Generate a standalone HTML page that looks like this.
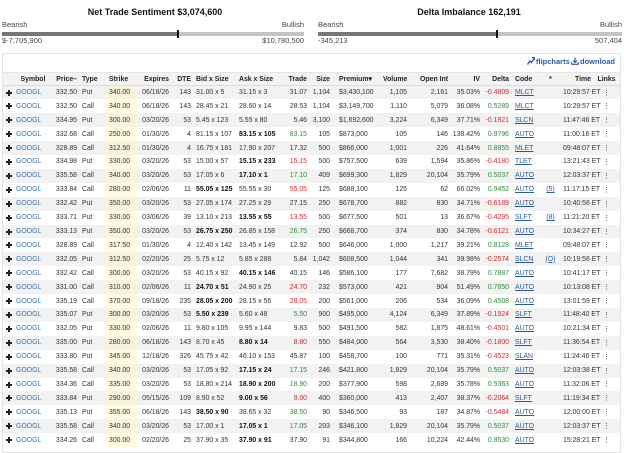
<!DOCTYPE html>
<html><head><meta charset="utf-8"><style>
*{margin:0;padding:0;box-sizing:border-box}
body{width:624px;height:445px;overflow:hidden;background:#fff;font-family:"Liberation Sans",sans-serif;color:#333;position:relative}
.t{position:absolute;font-weight:bold;font-size:9px;color:#111;text-align:center}
.l{position:absolute;font-size:7.5px;color:#444}
.bar{position:absolute;height:4px;top:32px}
.mk{position:absolute;top:30px;width:2px;height:8px;background:#111}
.box{position:absolute;left:2px;top:53px;width:619px;height:400px;border:1px solid #e4e4e4}
.tb{position:absolute;top:57px;font-size:7.5px;font-weight:bold;color:#2a5f9e}
.tb svg{vertical-align:-1px;margin-right:1px}
table{position:absolute;left:3px;top:72px;border-collapse:collapse;table-layout:fixed;width:617px;font-size:6.9px}
td,th{padding:0;white-space:nowrap;overflow:visible;height:13.92px}
th{height:13px;font-weight:bold;color:#222;background:#f3f3f3;border-bottom:1px solid #ddd;border-top:1px solid #e6e6e6}
tr:nth-child(even) td{background:#f2f2f2}
td.s{background:#fffbe3 !important;padding-left:4px}
tr:nth-child(even) td.s{background:#f7f3dc !important}
.r{text-align:right;padding-right:2px}
.lf{text-align:left;padding-left:3px}
.c{text-align:center}
.g{color:#2e8b3e}.rd{color:#d0282c}
.sy{color:#3d74ad}
.cd{color:#2a5a9e;text-decoration:underline}
b{font-weight:bold;color:#111}
.p{position:relative}
.p::before{content:"";position:absolute;left:3px;top:6px;width:6px;height:2px;background:#222}
.p::after{content:"";position:absolute;left:5px;top:4px;width:2px;height:6px;background:#222}
</style></head><body>
<div class="t" style="left:0;width:310px;top:7px">Net Trade Sentiment $3,074,600</div>
<div class="l" style="left:2px;top:20px">Bearish</div>
<div class="l" style="left:270px;top:20px;width:34px;text-align:right">Bullish</div>
<div class="bar" style="left:2px;width:176px;background:#777"></div>
<div class="bar" style="left:178px;width:126px;background:#c4c4c4"></div>
<div class="mk" style="left:177px"></div>
<div class="l" style="left:2px;top:36px">$-7,705,900</div>
<div class="l" style="left:240px;top:36px;width:64px;text-align:right">$10,780,500</div>

<div class="t" style="left:316px;width:306px;top:7px">Delta Imbalance 162,191</div>
<div class="l" style="left:318px;top:20px">Bearish</div>
<div class="l" style="left:580px;top:20px;width:42px;text-align:right">Bullish</div>
<div class="bar" style="left:318px;width:179px;background:#777"></div>
<div class="bar" style="left:497px;width:125px;background:#c4c4c4"></div>
<div class="mk" style="left:496px"></div>
<div class="l" style="left:318px;top:36px">-345,213</div>
<div class="l" style="left:570px;top:36px;width:52px;text-align:right">507,404</div>

<div class="box"></div>
<div class="tb" style="left:527px"><svg width="8" height="8" viewBox="0 0 8 8"><path d="M0.5 7.5 L3 4 L4.5 5.5 L7.5 1" stroke="#2a5f9e" stroke-width="1.4" fill="none"/><path d="M5 0.5 H7.5 V3" stroke="#2a5f9e" stroke-width="1.2" fill="none"/></svg>flipcharts</div>
<div class="tb" style="left:571px"><svg width="8" height="8" viewBox="0 0 8 8"><path d="M4 0.5 V5.5 M2 3.5 L4 5.5 L6 3.5 M0.8 5 V7.3 H7.2 V5" stroke="#2a5f9e" stroke-width="1.2" fill="none"/></svg>download</div>

<table>
<colgroup><col style="width:10px"><col style="width:40px"><col style="width:26px"><col style="width:26px"><col style="width:32px"><col style="width:34px"><col style="width:22px"><col style="width:43px"><col style="width:47px"><col style="width:26px"><col style="width:23px"><col style="width:51px"><col style="width:26px"><col style="width:41px"><col style="width:32px"><col style="width:29px"><col style="width:27px"><col style="width:25px"><col style="width:30px"><col style="width:27px"></colgroup>
<tr><th></th><th class="c">Symbol</th><th class="r">Price&#x2013;</th><th class="lf">Type</th><th class="lf" style="padding-left:4px">Strike</th><th class="r">Expires</th><th class="r">DTE</th><th class="lf">Bid x Size</th><th class="lf">Ask x Size</th><th class="r">Trade</th><th class="r">Size</th><th class="lf" style="padding-left:7px">Premium&#x25BE;</th><th class="r">Volume</th><th class="r">Open Int</th><th class="r">IV</th><th class="r">Delta</th><th class="lf" style="padding-left:4px">Code</th><th class="c">*</th><th class="r">Time</th><th class="c">Links</th></tr>
<tr><td class="p"></td><td class="sy lf">GOOGL</td><td class="r">332.50</td><td class="lf">Put</td><td class="s">340.00</td><td class="r">06/18/26</td><td class="r">143</td><td class="lf">31.00 x 5</td><td class="lf">31.15 x 3</td><td class="r">31.07</td><td class="r">1,104</td><td class="lf" style="padding-left:7px">$3,430,100</td><td class="r">1,105</td><td class="r">2,161</td><td class="r">35.03%</td><td class="r rd">-0.4809</td><td class="lf cd" style="padding-left:4px">MLCT</td><td></td><td class="r">10:29:57 ET</td><td class="c">&#8942;</td></tr>
<tr><td class="p"></td><td class="sy lf">GOOGL</td><td class="r">332.50</td><td class="lf">Call</td><td class="s">340.00</td><td class="r">06/18/26</td><td class="r">143</td><td class="lf">28.45 x 21</td><td class="lf">28.60 x 14</td><td class="r">28.53</td><td class="r">1,104</td><td class="lf" style="padding-left:7px">$3,149,700</td><td class="r">1,110</td><td class="r">5,079</td><td class="r">36.08%</td><td class="r g">0.5289</td><td class="lf cd" style="padding-left:4px">MLCT</td><td></td><td class="r">10:29:57 ET</td><td class="c">&#8942;</td></tr>
<tr><td class="p"></td><td class="sy lf">GOOGL</td><td class="r">334.95</td><td class="lf">Put</td><td class="s">300.00</td><td class="r">03/20/26</td><td class="r">53</td><td class="lf">5.45 x 123</td><td class="lf">5.55 x 80</td><td class="r">5.46</td><td class="r">3,100</td><td class="lf" style="padding-left:7px">$1,692,600</td><td class="r">3,224</td><td class="r">6,349</td><td class="r">37.71%</td><td class="r rd">-0.1921</td><td class="lf cd" style="padding-left:4px">SLCN</td><td></td><td class="r">11:47:46 ET</td><td class="c">&#8942;</td></tr>
<tr><td class="p"></td><td class="sy lf">GOOGL</td><td class="r">332.68</td><td class="lf">Call</td><td class="s">250.00</td><td class="r">01/30/26</td><td class="r">4</td><td class="lf">81.15 x 107</td><td class="lf"><b>83.15 x 105</b></td><td class="r g">83.15</td><td class="r">105</td><td class="lf" style="padding-left:7px">$873,000</td><td class="r">105</td><td class="r">146</td><td class="r">138.42%</td><td class="r g">0.9796</td><td class="lf cd" style="padding-left:4px">AUTO</td><td></td><td class="r">11:00:16 ET</td><td class="c">&#8942;</td></tr>
<tr><td class="p"></td><td class="sy lf">GOOGL</td><td class="r">328.89</td><td class="lf">Call</td><td class="s">312.50</td><td class="r">01/30/26</td><td class="r">4</td><td class="lf">16.75 x 181</td><td class="lf">17.90 x 207</td><td class="r">17.32</td><td class="r">500</td><td class="lf" style="padding-left:7px">$866,000</td><td class="r">1,001</td><td class="r">226</td><td class="r">41.64%</td><td class="r g">0.8855</td><td class="lf cd" style="padding-left:4px">MLET</td><td></td><td class="r">09:48:07 ET</td><td class="c">&#8942;</td></tr>
<tr><td class="p"></td><td class="sy lf">GOOGL</td><td class="r">334.98</td><td class="lf">Put</td><td class="s">330.00</td><td class="r">03/20/26</td><td class="r">53</td><td class="lf">15.00 x 57</td><td class="lf"><b>15.15 x 233</b></td><td class="r rd">15.15</td><td class="r">500</td><td class="lf" style="padding-left:7px">$757,500</td><td class="r">639</td><td class="r">1,594</td><td class="r">35.86%</td><td class="r rd">-0.4180</td><td class="lf cd" style="padding-left:4px">TLET</td><td></td><td class="r">13:21:43 ET</td><td class="c">&#8942;</td></tr>
<tr><td class="p"></td><td class="sy lf">GOOGL</td><td class="r">335.58</td><td class="lf">Call</td><td class="s">340.00</td><td class="r">03/20/26</td><td class="r">53</td><td class="lf">17.05 x 6</td><td class="lf"><b>17.10 x 1</b></td><td class="r g">17.10</td><td class="r">409</td><td class="lf" style="padding-left:7px">$699,300</td><td class="r">1,829</td><td class="r">20,104</td><td class="r">35.79%</td><td class="r g">0.5037</td><td class="lf cd" style="padding-left:4px">AUTO</td><td></td><td class="r">12:03:37 ET</td><td class="c">&#8942;</td></tr>
<tr><td class="p"></td><td class="sy lf">GOOGL</td><td class="r">333.84</td><td class="lf">Call</td><td class="s">280.00</td><td class="r">02/06/26</td><td class="r">11</td><td class="lf"><b>55.05 x 125</b></td><td class="lf">55.55 x 30</td><td class="r rd">55.05</td><td class="r">125</td><td class="lf" style="padding-left:7px">$688,100</td><td class="r">125</td><td class="r">62</td><td class="r">66.02%</td><td class="r g">0.9452</td><td class="lf cd" style="padding-left:4px">AUTO</td><td class="cd c">(5)</td><td class="r">11:17:15 ET</td><td class="c">&#8942;</td></tr>
<tr><td class="p"></td><td class="sy lf">GOOGL</td><td class="r">332.42</td><td class="lf">Put</td><td class="s">350.00</td><td class="r">03/20/26</td><td class="r">53</td><td class="lf">27.05 x 174</td><td class="lf">27.25 x 29</td><td class="r">27.15</td><td class="r">250</td><td class="lf" style="padding-left:7px">$678,700</td><td class="r">882</td><td class="r">830</td><td class="r">34.71%</td><td class="r rd">-0.6189</td><td class="lf cd" style="padding-left:4px">AUTO</td><td></td><td class="r">10:40:58 ET</td><td class="c">&#8942;</td></tr>
<tr><td class="p"></td><td class="sy lf">GOOGL</td><td class="r">333.71</td><td class="lf">Put</td><td class="s">330.00</td><td class="r">03/06/26</td><td class="r">39</td><td class="lf">13.10 x 213</td><td class="lf"><b>13.55 x 55</b></td><td class="r rd">13.55</td><td class="r">500</td><td class="lf" style="padding-left:7px">$677,500</td><td class="r">501</td><td class="r">13</td><td class="r">36.67%</td><td class="r rd">-0.4295</td><td class="lf cd" style="padding-left:4px">SLFT</td><td class="cd c">(8)</td><td class="r">11:21:20 ET</td><td class="c">&#8942;</td></tr>
<tr><td class="p"></td><td class="sy lf">GOOGL</td><td class="r">333.13</td><td class="lf">Put</td><td class="s">350.00</td><td class="r">03/20/26</td><td class="r">53</td><td class="lf"><b>26.75 x 250</b></td><td class="lf">26.85 x 158</td><td class="r g">26.75</td><td class="r">250</td><td class="lf" style="padding-left:7px">$668,700</td><td class="r">374</td><td class="r">830</td><td class="r">34.78%</td><td class="r rd">-0.6121</td><td class="lf cd" style="padding-left:4px">AUTO</td><td></td><td class="r">10:34:27 ET</td><td class="c">&#8942;</td></tr>
<tr><td class="p"></td><td class="sy lf">GOOGL</td><td class="r">328.89</td><td class="lf">Call</td><td class="s">317.50</td><td class="r">01/30/26</td><td class="r">4</td><td class="lf">12.40 x 142</td><td class="lf">13.45 x 149</td><td class="r">12.92</td><td class="r">500</td><td class="lf" style="padding-left:7px">$646,000</td><td class="r">1,000</td><td class="r">1,217</td><td class="r">39.21%</td><td class="r g">0.8128</td><td class="lf cd" style="padding-left:4px">MLET</td><td></td><td class="r">09:48:07 ET</td><td class="c">&#8942;</td></tr>
<tr><td class="p"></td><td class="sy lf">GOOGL</td><td class="r">332.05</td><td class="lf">Put</td><td class="s">312.50</td><td class="r">02/20/26</td><td class="r">25</td><td class="lf">5.75 x 12</td><td class="lf">5.85 x 288</td><td class="r">5.84</td><td class="r">1,042</td><td class="lf" style="padding-left:7px">$608,500</td><td class="r">1,044</td><td class="r">341</td><td class="r">39.98%</td><td class="r rd">-0.2574</td><td class="lf cd" style="padding-left:4px">SLCN</td><td class="cd c">(O)</td><td class="r">10:19:58 ET</td><td class="c">&#8942;</td></tr>
<tr><td class="p"></td><td class="sy lf">GOOGL</td><td class="r">332.42</td><td class="lf">Call</td><td class="s">300.00</td><td class="r">03/20/26</td><td class="r">53</td><td class="lf">40.15 x 92</td><td class="lf"><b>40.15 x 146</b></td><td class="r">40.15</td><td class="r">146</td><td class="lf" style="padding-left:7px">$586,100</td><td class="r">177</td><td class="r">7,682</td><td class="r">38.79%</td><td class="r g">0.7887</td><td class="lf cd" style="padding-left:4px">AUTO</td><td></td><td class="r">10:41:17 ET</td><td class="c">&#8942;</td></tr>
<tr><td class="p"></td><td class="sy lf">GOOGL</td><td class="r">331.00</td><td class="lf">Call</td><td class="s">310.00</td><td class="r">02/06/26</td><td class="r">11</td><td class="lf"><b>24.70 x 51</b></td><td class="lf">24.90 x 25</td><td class="r rd">24.70</td><td class="r">232</td><td class="lf" style="padding-left:7px">$573,000</td><td class="r">421</td><td class="r">904</td><td class="r">51.49%</td><td class="r g">0.7850</td><td class="lf cd" style="padding-left:4px">AUTO</td><td></td><td class="r">10:13:08 ET</td><td class="c">&#8942;</td></tr>
<tr><td class="p"></td><td class="sy lf">GOOGL</td><td class="r">335.19</td><td class="lf">Call</td><td class="s">370.00</td><td class="r">09/18/26</td><td class="r">235</td><td class="lf"><b>28.05 x 200</b></td><td class="lf">28.15 x 56</td><td class="r rd">28.05</td><td class="r">200</td><td class="lf" style="padding-left:7px">$561,000</td><td class="r">206</td><td class="r">534</td><td class="r">36.09%</td><td class="r g">0.4508</td><td class="lf cd" style="padding-left:4px">AUTO</td><td></td><td class="r">13:01:59 ET</td><td class="c">&#8942;</td></tr>
<tr><td class="p"></td><td class="sy lf">GOOGL</td><td class="r">335.07</td><td class="lf">Put</td><td class="s">300.00</td><td class="r">03/20/26</td><td class="r">53</td><td class="lf"><b>5.50 x 239</b></td><td class="lf">5.60 x 48</td><td class="r g">5.50</td><td class="r">900</td><td class="lf" style="padding-left:7px">$495,000</td><td class="r">4,124</td><td class="r">6,349</td><td class="r">37.89%</td><td class="r rd">-0.1924</td><td class="lf cd" style="padding-left:4px">SLFT</td><td></td><td class="r">11:48:40 ET</td><td class="c">&#8942;</td></tr>
<tr><td class="p"></td><td class="sy lf">GOOGL</td><td class="r">332.05</td><td class="lf">Put</td><td class="s">330.00</td><td class="r">02/06/26</td><td class="r">11</td><td class="lf">9.80 x 105</td><td class="lf">9.95 x 144</td><td class="r">9.83</td><td class="r">500</td><td class="lf" style="padding-left:7px">$491,500</td><td class="r">582</td><td class="r">1,875</td><td class="r">48.61%</td><td class="r rd">-0.4501</td><td class="lf cd" style="padding-left:4px">AUTO</td><td></td><td class="r">10:21:34 ET</td><td class="c">&#8942;</td></tr>
<tr><td class="p"></td><td class="sy lf">GOOGL</td><td class="r">335.00</td><td class="lf">Put</td><td class="s">280.00</td><td class="r">06/18/26</td><td class="r">143</td><td class="lf">8.70 x 45</td><td class="lf"><b>8.80 x 14</b></td><td class="r rd">8.80</td><td class="r">550</td><td class="lf" style="padding-left:7px">$484,000</td><td class="r">564</td><td class="r">3,530</td><td class="r">38.40%</td><td class="r rd">-0.1800</td><td class="lf cd" style="padding-left:4px">SLFT</td><td></td><td class="r">11:36:54 ET</td><td class="c">&#8942;</td></tr>
<tr><td class="p"></td><td class="sy lf">GOOGL</td><td class="r">333.80</td><td class="lf">Put</td><td class="s">345.00</td><td class="r">12/18/26</td><td class="r">326</td><td class="lf">45.75 x 42</td><td class="lf">46.10 x 153</td><td class="r">45.87</td><td class="r">100</td><td class="lf" style="padding-left:7px">$458,700</td><td class="r">100</td><td class="r">771</td><td class="r">35.31%</td><td class="r rd">-0.4523</td><td class="lf cd" style="padding-left:4px">SLAN</td><td></td><td class="r">11:24:46 ET</td><td class="c">&#8942;</td></tr>
<tr><td class="p"></td><td class="sy lf">GOOGL</td><td class="r">335.58</td><td class="lf">Call</td><td class="s">340.00</td><td class="r">03/20/26</td><td class="r">53</td><td class="lf">17.05 x 92</td><td class="lf"><b>17.15 x 24</b></td><td class="r g">17.15</td><td class="r">246</td><td class="lf" style="padding-left:7px">$421,800</td><td class="r">1,829</td><td class="r">20,104</td><td class="r">35.79%</td><td class="r g">0.5037</td><td class="lf cd" style="padding-left:4px">AUTO</td><td></td><td class="r">12:03:38 ET</td><td class="c">&#8942;</td></tr>
<tr><td class="p"></td><td class="sy lf">GOOGL</td><td class="r">334.36</td><td class="lf">Call</td><td class="s">335.00</td><td class="r">03/20/26</td><td class="r">53</td><td class="lf">18.80 x 214</td><td class="lf"><b>18.90 x 200</b></td><td class="r g">18.90</td><td class="r">200</td><td class="lf" style="padding-left:7px">$377,900</td><td class="r">598</td><td class="r">2,689</td><td class="r">35.78%</td><td class="r g">0.5363</td><td class="lf cd" style="padding-left:4px">AUTO</td><td></td><td class="r">11:32:06 ET</td><td class="c">&#8942;</td></tr>
<tr><td class="p"></td><td class="sy lf">GOOGL</td><td class="r">333.84</td><td class="lf">Put</td><td class="s">290.00</td><td class="r">05/15/26</td><td class="r">109</td><td class="lf">8.90 x 52</td><td class="lf"><b>9.00 x 56</b></td><td class="r rd">9.00</td><td class="r">400</td><td class="lf" style="padding-left:7px">$360,000</td><td class="r">413</td><td class="r">2,407</td><td class="r">38.37%</td><td class="r rd">-0.2064</td><td class="lf cd" style="padding-left:4px">SLFT</td><td></td><td class="r">11:19:34 ET</td><td class="c">&#8942;</td></tr>
<tr><td class="p"></td><td class="sy lf">GOOGL</td><td class="r">335.13</td><td class="lf">Put</td><td class="s">355.00</td><td class="r">06/18/26</td><td class="r">143</td><td class="lf"><b>38.50 x 90</b></td><td class="lf">38.65 x 32</td><td class="r g">38.50</td><td class="r">90</td><td class="lf" style="padding-left:7px">$346,500</td><td class="r">93</td><td class="r">187</td><td class="r">34.87%</td><td class="r rd">-0.5484</td><td class="lf cd" style="padding-left:4px">AUTO</td><td></td><td class="r">12:00:00 ET</td><td class="c">&#8942;</td></tr>
<tr><td class="p"></td><td class="sy lf">GOOGL</td><td class="r">335.58</td><td class="lf">Call</td><td class="s">340.00</td><td class="r">03/20/26</td><td class="r">53</td><td class="lf">17.00 x 1</td><td class="lf"><b>17.05 x 1</b></td><td class="r g">17.05</td><td class="r">203</td><td class="lf" style="padding-left:7px">$346,100</td><td class="r">1,829</td><td class="r">20,104</td><td class="r">35.79%</td><td class="r g">0.5037</td><td class="lf cd" style="padding-left:4px">AUTO</td><td></td><td class="r">12:03:37 ET</td><td class="c">&#8942;</td></tr>
<tr><td class="p"></td><td class="sy lf">GOOGL</td><td class="r">334.26</td><td class="lf">Call</td><td class="s">300.00</td><td class="r">02/20/26</td><td class="r">25</td><td class="lf">37.90 x 35</td><td class="lf"><b>37.90 x 91</b></td><td class="r">37.90</td><td class="r">91</td><td class="lf" style="padding-left:7px">$344,800</td><td class="r">166</td><td class="r">10,224</td><td class="r">42.44%</td><td class="r g">0.8530</td><td class="lf cd" style="padding-left:4px">AUTO</td><td></td><td class="r">15:28:21 ET</td><td class="c">&#8942;</td></tr>
</table>
</body></html>
